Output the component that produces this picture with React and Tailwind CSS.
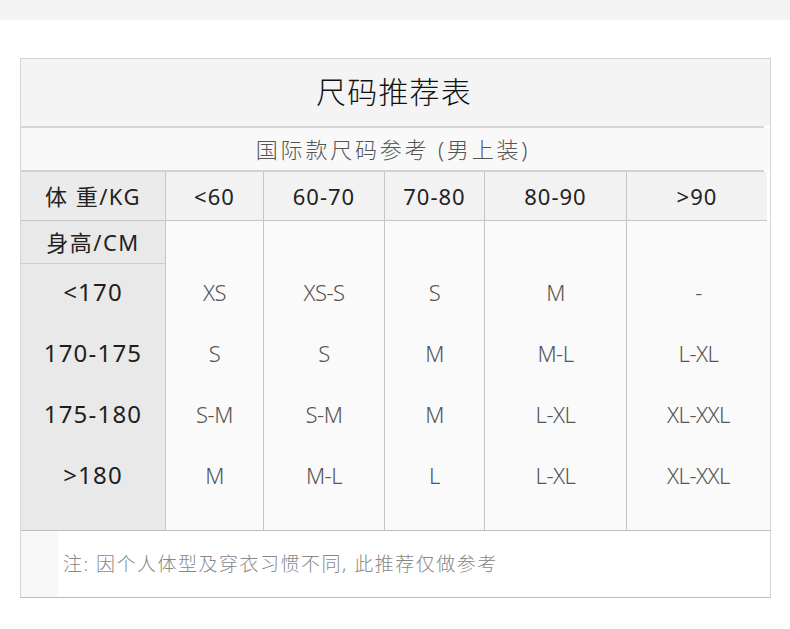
const cols = 'grid grid-cols-[145px_98px_121px_100px_142px_1fr]';

const weights = ['<60', '60-70', '70-80', '80-90', '>90'];

const rows = [
  { h: '<170', v: ['XS', 'XS-S', 'S', 'M', '-'] },
  { h: '170-175', v: ['S', 'S', 'M', 'M-L', 'L-XL'] },
  { h: '175-180', v: ['S-M', 'S-M', 'M', 'L-XL', 'XL-XXL'] },
  { h: '>180', v: ['M', 'M-L', 'L', 'L-XL', 'XL-XXL'] },
];

const sans = "font-['Noto_Sans','Noto_Sans_CJK_SC',sans-serif]";

export default function App() {
  return (
    <div className={`w-[790px] h-[629px] bg-white ${sans}`}>
      <div className="h-5 bg-[#f4f4f4]" />
      <div className="px-5 pt-[38px]">
        <div className="w-[751px] border border-[#d4d4d4] border-b-[#bdbdbd]">
          {/* title */}
          <div className="h-[67px] bg-[#f4f4f4] flex items-center justify-center">
            <h1 className="text-[30px] leading-none font-light text-[#111] tracking-[1.2px] pb-[2px] pr-[3px]">尺码推荐表</h1>
          </div>
          <div className="mr-[6px] h-[2px] bg-[#d6d6d6]" />
          {/* subtitle */}
          <div className="h-[42px] bg-[#f9f9f9] flex items-center justify-center">
            <span className="text-[22px] font-light text-[#555] tracking-[2.8px] pr-[5px]">国际款尺码参考 (男上装)</span>
          </div>
          <div className="mr-[6px] h-[2px] bg-[#d2d2d2]" />
          {/* header */}
          <div className={`${cols} h-[49px] mr-[3px] bg-[#f2f2f2] border-b border-[#c6c6c6] text-[22px] text-[#222]`}>
            <div className="bg-[#ebebeb] border-r border-[#c6c6c6] flex items-center justify-center tracking-[1.5px] pt-px">
              体 重/KG
            </div>
            {weights.map((w, i) => (
              <div
                key={w}
                className={`flex items-center justify-center tracking-[1px] pt-px ${i < 4 ? 'border-r border-[#c6c6c6]' : ''}`}
              >
                {w}
              </div>
            ))}
          </div>
          {/* body */}
          <div className={`${cols} bg-[#fafafa]`}>
            <div className="bg-[#e9e9e9] border-r border-[#c6c6c6] flex flex-col">
              <div className="h-[43px] border-b border-[#cfcfcf] flex items-center justify-center text-[22px] text-[#222] tracking-[1.5px] pt-px">
                身高/CM
              </div>
              {rows.map((r) => (
                <div key={r.h} className="h-[61px] flex items-center justify-center text-[24px] text-[#1e1e1e] tracking-[1.2px] pb-[5px]">
                  {r.h}
                </div>
              ))}
              <div className="h-[22px]" />
            </div>
            {weights.map((w, ci) => (
              <div key={w} className={`flex flex-col ${ci < 4 ? 'border-r border-[#c6c6c6]' : ''}`}>
                <div className="h-[43px]" />
                {rows.map((r) => (
                  <div
                    key={r.h}
                    className="h-[61px] flex items-center justify-center text-[22px] font-light text-[#555] tracking-[-0.5px] pb-[5px]"
                  >
                    {r.v[ci]}
                  </div>
                ))}
                <div className="h-[22px]" />
              </div>
            ))}
          </div>
          {/* footer */}
          <div className="h-[67px] border-t border-[#bdbdbd] bg-white flex">
            <div className="w-[37px] bg-[#f8f8f8]" />
            <div className="flex items-center pl-[5px] pt-px text-[19px] font-light text-[#888] tracking-[1.5px]">
              注: 因个人体型及穿衣习惯不同, 此推荐仅做参考
            </div>
          </div>
        </div>
      </div>
    </div>
  );
}
